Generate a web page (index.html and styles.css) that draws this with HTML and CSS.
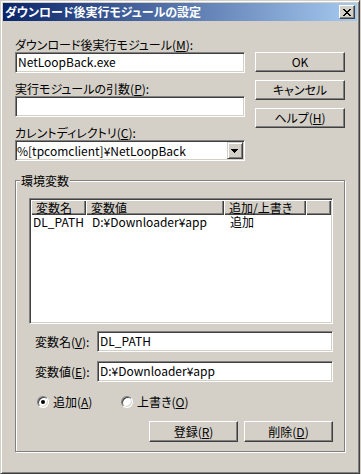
FILE: index.html
```html
<!DOCTYPE html>
<html lang="ja">
<head>
    <meta charset="UTF-8">
    <title>ダウンロード後実行モジュールの設定</title>
    <link rel="stylesheet" href="styles.css">
</head>
<body>
    <div class="window">
        <div class="titlebar">
            <span class="title">ダウンロード後実行モジュールの設定</span>
            <span class="close">
                <svg width="8" height="7" viewBox="0 0 8 7" shape-rendering="crispEdges"><path d="M0 0h2v1h-2z M6 0h2v1h-2z M1 1h2v1h-2z M5 1h2v1h-2z M2 2h4v1h-4z M3 3h2v1h-2z M2 4h4v1h-4z M1 5h2v1h-2z M5 5h2v1h-2z M0 6h2v1h-2z M6 6h2v1h-2z" fill="#000"/></svg>
            </span>
        </div>

        <div class="client">
            <div class="top">
                <div class="fields">
                    <div class="label">ダウンロード後実行モジュール(<u>M</u>):</div>
                    <div class="edit">NetLoopBack.exe</div>
                    <div class="label">実行モジュールの引数(<u>P</u>):</div>
                    <div class="edit"></div>
                    <div class="label">カレントディレクトリ(<u>C</u>):</div>
                    <div class="combo">
                        <span class="combo-text">%[tpcomclient]¥NetLoopBack</span>
                        <span class="drop">
                            <svg width="7" height="4" viewBox="0 0 7 4" shape-rendering="crispEdges"><path d="M0 0h7v1h-1v1h-1v1h-1v1h-1v-1h-1v-1h-1v-1h-1z" fill="#000"/></svg>
                        </span>
                    </div>
                </div>
                <div class="side-buttons">
                    <button class="btn">OK</button>
                    <button class="btn">キャンセル</button>
                    <button class="btn">ヘルプ(<u>H</u>)</button>
                </div>
            </div>

            <!-- 環境変数 group -->
            <fieldset class="group">
                <legend>環境変数</legend>
                <div class="group-body">
                    <div class="list">
                        <div class="list-head">
                            <span class="hcell col-name">変数名</span>
                            <span class="hcell col-value">変数値</span>
                            <span class="hcell col-mode">追加/上書き</span>
                            <span class="hcell col-rest"></span>
                        </div>
                        <div class="list-row">
                            <span class="cell col-name first">DL_PATH</span>
                            <span class="cell col-value">D:¥Downloader¥app</span>
                            <span class="cell col-mode">追加</span>
                        </div>
                    </div>

                    <div class="field-row">
                        <span class="field-label">変数名(<u>V</u>):</span>
                        <div class="edit">DL_PATH</div>
                    </div>
                    <div class="field-row">
                        <span class="field-label">変数値(<u>E</u>):</span>
                        <div class="edit">D:¥Downloader¥app</div>
                    </div>

                    <div class="radios">
                        <span class="radio"><span class="radio-mark checked"></span><span>追加(<u>A</u>)</span></span>
                        <span class="radio"><span class="radio-mark"></span><span>上書き(<u>O</u>)</span></span>
                    </div>

                    <div class="group-buttons">
                        <button class="btn wide">登録(<u>R</u>)</button>
                        <button class="btn wide">削除(<u>D</u>)</button>
                    </div>
                </div>
            </fieldset>
        </div>
    </div>
</body>
</html>
```

FILE: styles.css
```css
/* Windows 2000 style dialog */
html, body {
    margin: 0;
    padding: 0;
}

body {
    background: #d4d0c8;
    font-family: "Noto Sans CJK JP", sans-serif;
    font-size: 12px;
    color: #000;
    font-feature-settings: "palt";
}

u {
    text-underline-offset: 1px;
}

.window {
    width: 360px;
    height: 474px;
    box-sizing: border-box;
    border: 1px solid;
    border-color: #d4d0c8 #404040 #404040 #d4d0c8;
    box-shadow: inset 1px 1px #fff, inset -1px -1px #808080;
    padding: 2px;
    display: flex;
    flex-direction: column;
}

/* Caption */
.titlebar {
    height: 18px;
    flex: none;
    display: flex;
    align-items: center;
    justify-content: space-between;
    padding: 0 2px;
    background: linear-gradient(to right, #0a246a, #a6caf0);
    color: #fff;
    font-weight: bold;
    line-height: 18px;
}

.close {
    width: 16px;
    height: 14px;
    box-sizing: border-box;
    background: #d4d0c8;
    border: 1px solid;
    border-color: #fff #404040 #404040 #fff;
    box-shadow: inset -1px -1px #808080;
    display: flex;
    align-items: center;
    justify-content: center;
}

.close svg {
    display: block;
}

.client {
    flex: 1;
    padding: 17px 12px 0 12px;
    display: flex;
    flex-direction: column;
}

.top {
    display: flex;
    gap: 10px;
}

.fields {
    width: 235px;
    display: flex;
    flex-direction: column;
}

.label {
    height: 13px;
    line-height: 13px;
    margin-bottom: 1px;
    white-space: nowrap;
}

/* Sunken text boxes */
.edit,
.combo {
    height: 21px;
    box-sizing: border-box;
    background: #fff;
    border: 1px solid;
    border-color: #808080 #fff #fff #808080;
    box-shadow: inset 1px 1px #404040, inset -1px -1px #d4d0c8;
    padding: 0 2px;
    line-height: 17px;
    white-space: nowrap;
    overflow: hidden;
}

.fields .edit {
    margin-bottom: 9px;
}

.combo {
    display: flex;
    padding: 1px;
}

.combo-text {
    flex: 1;
    line-height: 17px;
}

.drop {
    width: 16px;
    height: 17px;
    box-sizing: border-box;
    background: #d4d0c8;
    border: 1px solid;
    border-color: #d4d0c8 #404040 #404040 #d4d0c8;
    box-shadow: inset 1px 1px #fff, inset -1px -1px #808080;
    display: flex;
    align-items: center;
    justify-content: center;
}

.drop svg {
    display: block;
}

/* Push buttons */
.btn {
    height: 20px;
    padding: 0;
    margin: 0;
    box-sizing: border-box;
    background: #d4d0c8;
    border: 1px solid;
    border-color: #fff #404040 #404040 #fff;
    box-shadow: inset -1px -1px #808080;
    font-family: inherit;
    font-size: 12px;
    font-feature-settings: "palt";
    color: #000;
    line-height: 16px;
}

.side-buttons {
    width: 92px;
    padding-top: 14px;
    display: flex;
    flex-direction: column;
    gap: 8px;
}

/* Group box */
.group {
    margin: 13px 0 0 0;
    padding: 11px 0 9px 0;
    border: 1px solid #808080;
    box-shadow: 1px 1px #fff, inset 1px 1px #fff;
    min-inline-size: 0;
}

.group legend {
    margin-left: 4px;
    padding: 0 1px;
    line-height: 13px;
    background: #d4d0c8;
}

.group-body {
    padding: 0 11px 0 13px;
}

/* List view */
.list {
    height: 126px;
    box-sizing: border-box;
    background: #fff;
    border: 1px solid;
    border-color: #808080 #fff #fff #808080;
    box-shadow: inset 1px 1px #404040, inset -1px -1px #d4d0c8;
    padding: 1px;
}

.list-head {
    display: flex;
    height: 15px;
}

.hcell {
    height: 15px;
    box-sizing: border-box;
    background: #d4d0c8;
    box-shadow: inset 1px 1px #fff, inset -1px -1px #404040, inset -2px -2px #808080;
    padding-left: 5px;
    line-height: 15px;
    white-space: nowrap;
    overflow: hidden;
}

.col-name { width: 55px; }
.col-value { width: 138px; }
.col-mode { width: 82px; }
.col-rest { flex: 1; }

.list-row {
    display: flex;
    height: 15px;
    line-height: 13px;
}

.cell {
    padding-left: 6px;
    box-sizing: border-box;
    white-space: nowrap;
}

.cell.first {
    padding-left: 2px;
}

.field-row {
    display: flex;
    align-items: center;
    margin-top: 9px;
}

.list + .field-row {
    margin-top: 7px;
}

.field-label {
    width: 68px;
    flex: none;
    padding-left: 6px;
    box-sizing: border-box;
    white-space: nowrap;
}

.field-row .edit {
    flex: 1;
}

/* Radio buttons */
.radios {
    display: flex;
    align-items: center;
    height: 13px;
    margin-top: 13px;
    padding-left: 8px;
}

.radio {
    width: 84px;
    display: flex;
    align-items: center;
    gap: 4px;
    line-height: 13px;
}

.radio-mark {
    width: 12px;
    height: 12px;
    flex: none;
    box-sizing: border-box;
    border-radius: 50%;
    border: 1px solid;
    border-color: #808080 #fff #fff #808080;
    box-shadow: inset 1px 1px #404040, inset -1px -1px #d4d0c8;
    background: #fff;
    display: flex;
    align-items: center;
    justify-content: center;
}

.radio-mark.checked::after {
    content: '';
    width: 4px;
    height: 4px;
    border-radius: 50%;
    background: #000;
}

.group-buttons {
    display: flex;
    justify-content: flex-end;
    gap: 6px;
    margin-top: 13px;
}

.btn.wide {
    width: 89px;
    height: 21px;
}
```
